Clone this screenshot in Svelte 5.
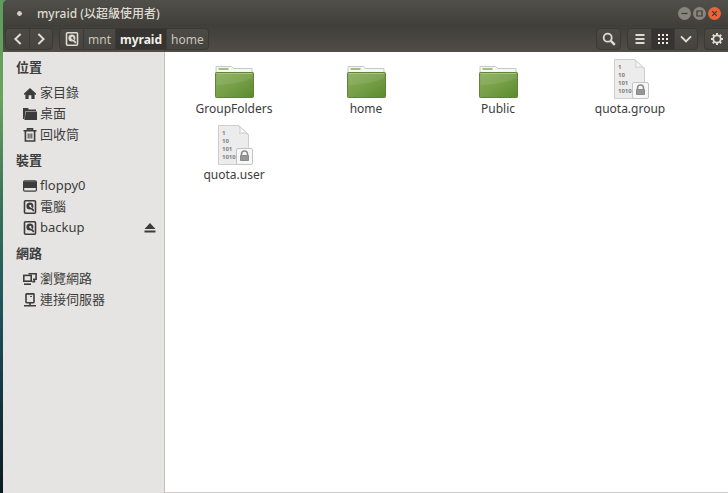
<script>
  const crumbs = ["mnt", "myraid", "home"];
  let current = $state("myraid");
  let view = $state("grid");

  const sections = [
    {
      title: "位置",
      items: [
        { name: "家目錄", icon: "home" },
        { name: "桌面", icon: "desktop" },
        { name: "回收筒", icon: "trash" },
      ],
    },
    {
      title: "裝置",
      items: [
        { name: "floppy0", icon: "floppy" },
        { name: "電腦", icon: "disk" },
        { name: "backup", icon: "disk", eject: true },
      ],
    },
    {
      title: "網路",
      items: [
        { name: "瀏覽網路", icon: "network" },
        { name: "連接伺服器", icon: "server" },
      ],
    },
  ];

  const files = [
    { name: "GroupFolders", folder: true },
    { name: "home", folder: true },
    { name: "Public", folder: true },
    { name: "quota.group", folder: false },
    { name: "quota.user", folder: false },
  ];
</script>

{#snippet icon(name)}
  <svg class="icon" viewBox="0 0 14 14" fill="none" stroke="currentColor" stroke-width="1.6" aria-hidden="true">
    {#if name === "home"}
      <path d="M7 2 1 7.4V9l1.4-.8V13h3.2V9.2h2.8V13h3.2V8.2L13 9V7.4Z" fill="currentColor" stroke="none" />
    {:else if name === "desktop"}
      <path d="M0 1h5.4v1.4H13V4H2.6L1.4 12H0Z" fill="currentColor" stroke="none" />
      <path d="M3 4.6h11V13H1.4Z" fill="currentColor" stroke="none" />
    {:else if name === "trash"}
      <path d="M0.5 2.8h13M4.5 2.4V.9h5v1.5M2.4 3v10h9.2V3" />
      <path d="M5.2 5.5v5M7 5.5v5M8.8 5.5v5" stroke-width="1" />
    {:else if name === "floppy"}
      <rect x="0.6" y="1.8" width="12.8" height="10.4" rx="1.2" stroke-width="1.2" />
      <path d="M1 2.4h12V9H1Z" fill="currentColor" stroke="none" />
    {:else if name === "disk"}
      <rect x="1.5" y="0.8" width="11" height="12.4" rx="1" />
      <circle cx="6.9" cy="6" r="3.5" fill="currentColor" stroke="none" />
      <circle cx="7.3" cy="5.9" r="1.1" fill="var(--hole)" stroke="none" />
      <path d="m7.3 6.4 3 3.2" stroke="var(--hole)" stroke-width="1.2" />
      <path d="m8.2 8.2 2.6 2.6" stroke-width="1.8" />
    {:else if name === "network"}
      <rect x="0.8" y="3.4" width="7.4" height="5.8" />
      <path d="M1 12.2h7" />
      <path d="M5.5 1.8h7.6v5.4H10M11.4 7.4v2.2H9.2" />
    {:else if name === "server"}
      <rect x="3" y="0.9" width="8" height="8.8" rx="0.6" />
      <path d="M7 9.5V12M1 12.8h12" />
      <path d="M7 3.4h2" stroke-width="1" />
    {:else if name === "back"}
      <path d="M9.6 2 4.4 7l5.2 5" stroke-width="2" />
    {:else if name === "forward"}
      <path d="m4.4 2 5.2 5-5.2 5" stroke-width="2" />
    {:else if name === "search"}
      <circle cx="5.7" cy="5.7" r="4" stroke-width="1.8" />
      <path d="m8.6 8.6 4.2 4.2" stroke-width="2.4" />
    {:else if name === "list"}
      <path d="M2.5 3h9M2.5 7h9M2.5 11h9" stroke-width="2" />
    {:else if name === "grid"}
      <path d="M2 3h10M2 7h10M2 11h10" stroke-width="2" stroke-dasharray="2 2" />
    {:else if name === "down"}
      <path d="m2 4.4 5 5 5-5" stroke-width="2" />
    {:else if name === "gear"}
      <circle cx="7" cy="7" r="3.7" stroke-width="1.8" />
      <path d="M7 1v2M7 11v2M1 7h2M11 7h2M2.8 2.8l1.4 1.4M9.8 9.8l1.4 1.4M2.8 11.2l1.4-1.4M9.8 4.2l1.4-1.4" stroke-width="2" />
    {/if}
  </svg>
{/snippet}

<svelte:head>
  <title>myraid</title>
</svelte:head>

<div class="desktop">
  <div class="window">
    <header class="titlebar">
      <span class="dot"></span>
      <h1>myraid (以超級使用者)</h1>
      <div class="controls">
        <button aria-label="Minimize">
          <svg viewBox="0 0 13 13"><path d="M3.5 6.5h6" /></svg>
        </button>
        <button aria-label="Maximize">
          <svg viewBox="0 0 13 13"><path d="M4 4h5v5H4Z" /></svg>
        </button>
        <button class="close" aria-label="Close">
          <svg viewBox="0 0 13 13"><path d="m4.2 4.2 4.6 4.6M8.8 4.2 4.2 8.8" /></svg>
        </button>
      </div>
    </header>

    <nav class="toolbar">
      <div class="group">
        <button aria-label="Back">{@render icon("back")}</button>
        <button aria-label="Forward">{@render icon("forward")}</button>
      </div>
      <div class="group">
        <button aria-label="Root">{@render icon("disk")}</button>
        {#each crumbs as crumb}
          <button class="crumb" class:active={current === crumb} onclick={() => (current = crumb)}>{crumb}</button>
        {/each}
      </div>
      <div class="group search">
        <button aria-label="Search">{@render icon("search")}</button>
      </div>
      <div class="group">
        <button class:active={view === "list"} aria-label="List view" onclick={() => (view = "list")}>{@render icon("list")}</button>
        <button class:active={view === "grid"} aria-label="Icon view" onclick={() => (view = "grid")}>{@render icon("grid")}</button>
        <button aria-label="View options">{@render icon("down")}</button>
      </div>
      <div class="group last">
        <button aria-label="Settings">{@render icon("gear")}</button>
      </div>
    </nav>

    <div class="main">
      <aside>
        {#each sections as section}
          <h2>{section.title}</h2>
          <ul>
            {#each section.items as item}
              <li>
                <a href="#{item.name}">{@render icon(item.icon)}<span>{item.name}</span></a>
                {#if item.eject}
                  <button class="eject" aria-label="Eject">
                    <svg viewBox="0 0 12 10"><path d="M6 0 11.5 6H.5ZM.5 7.4h11v2H.5Z" fill="currentColor" /></svg>
                  </button>
                {/if}
              </li>
            {/each}
          </ul>
        {/each}
      </aside>

      <section class="files">
        {#each files as file}
          <button class="file">
            {#if file.folder}
              <svg class="picture" viewBox="0 0 42 42" aria-hidden="true">
                <defs>
                  <linearGradient id="green" x1="0" y1="0" x2="1" y2="1">
                    <stop offset="0" stop-color="#8aae5a" />
                    <stop offset="0.5" stop-color="#769f47" />
                    <stop offset="1" stop-color="#5a8a2c" />
                  </linearGradient>
                </defs>
                <path d="M3 16V8.5h15.5l1.8 2H39V16Z" fill="#f6f8f4" stroke="#c6cac1" />
                <path d="M5.5 11h10" stroke="#8faf63" stroke-width="1.6" />
                <rect x="2.5" y="14.5" width="38" height="25" rx="0.8" fill="url(#green)" stroke="#5f8638" />
                <path d="M3.5 15.5h36" stroke="#a9c582" />
                <path d="M3.5 16v11Q24 27 39.5 20v-4Z" fill="#fff" opacity="0.08" />
              </svg>
            {:else}
              <svg class="picture" viewBox="0 0 42 42" aria-hidden="true">
                <path d="M5.5 1.5h20l10 9v30h-30Z" fill="#ececec" stroke="#cecece" />
                <path d="M25.5 1.5c2 3 2 5 1 8 3-1 6-1 9 1Z" fill="#fafafa" stroke="#cecece" />
                <g class="digits">
                  <text x="9" y="11">1</text>
                  <text x="9" y="19">10</text>
                  <text x="9" y="27">101</text>
                  <text x="9" y="35">1010</text>
                </g>
                <rect x="23.5" y="24.5" width="16" height="16" rx="1.5" fill="#f7f7f7" stroke="#c4c4c4" />
                <path d="M28.5 32v-2a3 3 0 0 1 6 0v2" fill="none" stroke="#8c8c8c" stroke-width="1.6" />
                <rect x="27" y="31" width="9" height="6" rx="0.8" fill="#8a8a8a" />
                <path d="M28 33h7M28 35h7" stroke="#b0b0b0" stroke-width="0.7" />
              </svg>
            {/if}
            <span>{file.name}</span>
          </button>
        {/each}
      </section>
    </div>
  </div>
</div>

<style>
  :global(body) {
    margin: 0;
  }

  .desktop {
    box-sizing: border-box;
    min-height: 100vh;
    padding-left: 3px;
    display: flex;
    background: linear-gradient(#5f9c5d, #68a25c 20%, #3c7358 40%, #225b5b 58%, #153a43 78%, #0b1a20);
    font-family: "Noto Sans", "Noto Sans CJK TC", sans-serif;
    font-size: 13px;
    color: #3c3c3c;
  }

  .window {
    flex: 1;
    min-width: 0;
    display: flex;
    flex-direction: column;
    background: #45433e;
    border-top-left-radius: 5px;
  }

  button {
    padding: 0;
    border: none;
    background: none;
    font: inherit;
    color: inherit;
    cursor: pointer;
  }

  .icon {
    width: 14px;
    height: 14px;
    flex: none;
  }

  .titlebar {
    display: flex;
    align-items: center;
    height: 26px;
    padding: 0 7px 0 13px;
    background: linear-gradient(#504f49, #403f3a);
    border-top-left-radius: 5px;
    color: #dfdbd2;
  }

  .dot {
    width: 5px;
    height: 5px;
    border: 1px solid #33322e;
    border-radius: 50%;
    background: #d0cdc5;
  }

  h1 {
    margin: 0 auto 0 14px;
    font-size: 12px;
    font-weight: 500;
  }

  .controls {
    display: flex;
    gap: 2px;
  }

  .controls button {
    width: 13px;
    height: 13px;
    border-radius: 50%;
    background: #87857d;
  }

  .controls svg {
    display: block;
    width: 13px;
    height: 13px;
    fill: none;
    stroke: #3c3b37;
    stroke-width: 1.2;
  }

  .controls .close {
    background: #ed6338;
  }

  .toolbar {
    --hole: #4a4944;
    display: flex;
    align-items: center;
    gap: 6px;
    height: 26px;
    padding-left: 2px;
    background: linear-gradient(#403f3a, #504d47);
    color: #dfdbd2;
  }

  .group {
    display: flex;
    height: 22px;
    box-sizing: border-box;
    border: 1px solid #3a3935;
    border-radius: 4px;
    background: linear-gradient(#4b4a45, #45443f);
    overflow: hidden;
  }

  .group button {
    display: flex;
    align-items: center;
    justify-content: center;
    box-sizing: border-box;
    min-width: 23px;
  }

  .group button + button {
    border-left: 1px solid #3c3b37;
  }

  .group .crumb {
    padding: 0 4px;
    font-size: 12px;
    color: #c9c5bc;
  }

  .group .active {
    background: #353430;
    color: #f2efe8;
    font-weight: bold;
  }

  .search {
    margin-left: auto;
  }

  .last {
    border-right: none;
    border-radius: 4px 0 0 4px;
  }

  .main {
    flex: 1;
    display: flex;
  }

  aside {
    --hole: #e6e4e2;
    box-sizing: border-box;
    flex: none;
    width: 162px;
    border-right: 1px solid #c4c2c0;
    background: #e6e4e2;
  }

  h2 {
    margin: 0;
    padding-left: 13px;
    font-size: 13px;
    line-height: 30px;
    font-weight: bold;
  }

  ul {
    margin: 0;
    padding: 0;
    list-style: none;
  }

  li {
    display: flex;
    justify-content: space-between;
    height: 21px;
    padding: 0 8px 0 20px;
  }

  a {
    display: flex;
    align-items: center;
    gap: 3px;
    line-height: 21px;
    color: inherit;
    text-decoration: none;
  }

  .eject svg {
    display: block;
    width: 12px;
    height: 10px;
  }

  .files {
    flex: 1;
    display: grid;
    grid-template-columns: repeat(auto-fill, 132px);
    align-content: start;
    row-gap: 6px;
    padding: 6px 0 0 3px;
    border-bottom: 1px solid #cfcdcb;
    background: #fff;
  }

  .file {
    display: flex;
    flex-direction: column;
    align-items: center;
    font-size: 12px;
    line-height: 18px;
  }

  .picture {
    width: 42px;
    height: 42px;
  }

  .digits {
    font-family: "Noto Sans", sans-serif;
    font-size: 6px;
    font-weight: bold;
    fill: #808080;
  }
</style>
